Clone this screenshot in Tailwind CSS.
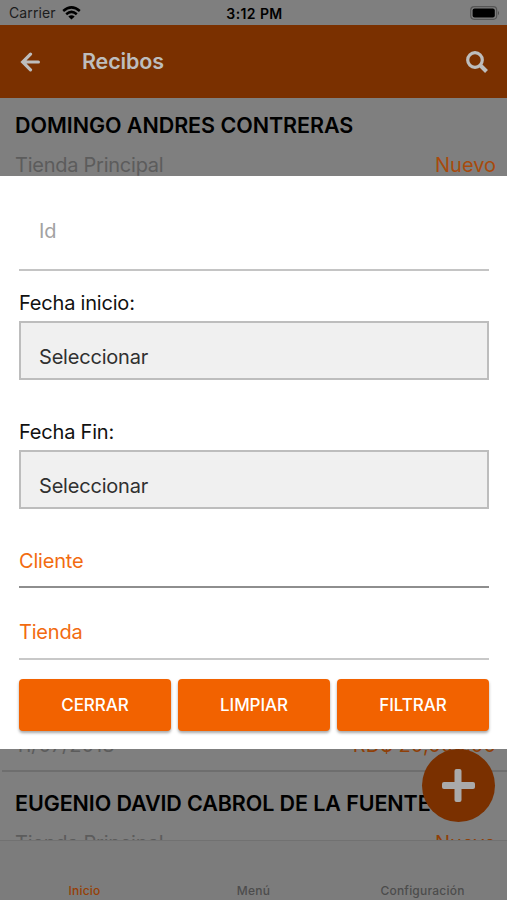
<!DOCTYPE html>
<html lang="es">
<head>
<meta charset="utf-8">
<title>Recibos</title>
<script src="https://cdn.jsdelivr.net/npm/@tailwindcss/browser@4"></script>
</head>
<body class="font-['Inter','Liberation_Sans',sans-serif] text-black">
<div class="relative flex h-[900px] w-[507px] flex-col overflow-hidden bg-[#7f7f7f] whitespace-nowrap">
  <!-- Status bar -->
  <header class="grid h-[25px] shrink-0 grid-cols-3 items-center pt-[1px] pr-[7px] pl-[9px]">
    <div class="flex items-center gap-[6px] text-[14px] leading-none tracking-[0.1px] text-[#1c1c1c]">Carrier
      <svg class="h-[14px] w-[19px]" viewBox="0 0 19 14" fill="none" stroke="#000" stroke-width="2.5"><path d="M1.2 5Q9.5-2.2 17.8 5M4.2 8.2Q9.5 3.6 14.8 8.2"/><path d="M9.5 13.5 6.3 10.4Q9.5 7.9 12.7 10.4Z" fill="#000" stroke="none"/></svg>
    </div>
    <div class="pt-[2px] text-center text-[14px] leading-none font-semibold tracking-[0.4px]">3:12 PM</div>
    <svg class="h-[14px] w-[30px] justify-self-end" viewBox="0 0 30 14"><rect x=".7" y=".7" width="26" height="12.6" rx="3.5" fill="#7f7f7f" stroke="#565656" stroke-width="1.2"/><rect x="2.6" y="2.4" width="22.2" height="9.2" rx="2" fill="#000"/><path d="M28 4.7q2 2.3 0 4.6Z" fill="#4d4d4d"/></svg>
  </header>
  <!-- Title bar -->
  <nav class="flex h-[73px] shrink-0 items-center bg-[#7a3000] pr-[19px] pl-[20px] text-[#bdbdbd]">
    <svg class="h-[20px] w-[20px]" viewBox="0 0 20 20" fill="none" stroke="currentColor" stroke-width="3.2" stroke-linecap="round"><path d="M18.400 10H3M10.500 2.200 2.700 10l7.800 7.800"/></svg>
    <h1 class="ml-[42px] flex-1 pt-px text-[21.500px] leading-none font-semibold tracking-[-0.15px]">Recibos</h1>
    <svg class="h-[22px] w-[22px]" viewBox="0 0 22 22" fill="none" stroke="currentColor"><circle cx="9" cy="9" r="7.300" stroke-width="3.200"/><path d="m14 14 6.500 6.500" stroke-width="4"/></svg>
  </nav>
  <!-- Receipts -->
  <main class="h-[742px] shrink-0 overflow-hidden">
    <article class="ml-[2px] flex h-[674px] flex-col justify-between border-b-2 border-[#6e6e6e] pt-[15px] pr-[11px] pb-[13px] pl-[13px] text-[20px] leading-[24px]">
      <div>
        <h2 class="text-[21.500px] font-semibold tracking-[-0.05px]">DOMINGO ANDRES CONTRERAS</h2>
        <div class="mt-[16px] flex justify-between text-[#5c5c5c]"><span class="tracking-[-0.25px]">Tienda Principal</span><span class="text-[#a84a0c]">Nuevo</span></div>
      </div>
      <div class="flex justify-between text-[#5c5c5c]"><span>11/07/2018</span><span class="text-[#8f3f08]">RD$ 20,000.00</span></div>
    </article>
    <article class="pt-[19px] pr-[11px] pl-[15px] text-[20px] leading-[24px]">
      <h2 class="text-[21.500px] font-semibold tracking-[-0.1px]">EUGENIO DAVID CABROL DE LA FUENTE</h2>
      <div class="mt-[16px] flex justify-between text-[#5c5c5c]"><span class="tracking-[-0.25px]">Tienda Principal</span><span class="text-[#8f3f08]">Nuevo</span></div>
    </article>
  </main>
  <!-- Tabs -->
  <footer class="grid flex-1 grid-cols-3 items-end border-t border-[#717171] bg-[#7c7c7c] pb-[2px] text-center text-[12px] leading-[14px] font-medium tracking-[0.22px] text-[#4c4c4c]">
    <span class="text-[#963f05]">Inicio</span><span>Menú</span><span>Configuración</span>
  </footer>
  <!-- Add button -->
  <button class="absolute top-[749px] left-[422px] flex h-[73px] w-[73px] items-center justify-center rounded-full bg-[#7a3000]">
    <svg class="h-[33px] w-[33px]" viewBox="0 0 33 33" fill="#aaa"><rect x="12.500" y="0" width="7" height="33" rx="2"/><rect x="0" y="13" width="33" height="7" rx="2"/></svg>
  </button>
  <!-- Filter dialog -->
  <section class="absolute inset-x-0 top-[176px] flex h-[573px] flex-col bg-white pr-[18px] pl-[19px] text-[20px] leading-[24px] tracking-[-0.2px]">
    <div class="h-[95px] shrink-0 border-b-2 border-[#c4c4c4] pt-[43px] pl-[20px] text-[#a2a2a2]">Id</div>
    <label class="mt-[20px] text-[#111]">Fecha inicio:</label>
    <div class="mt-[6px] h-[59px] shrink-0 border-2 border-[#bdbdbd] bg-[#f0f0f0] pt-[22px] pl-[18px] text-[#303030]">Seleccionar</div>
    <label class="mt-[40px] text-[#111]">Fecha Fin:</label>
    <div class="mt-[6px] h-[59px] shrink-0 border-2 border-[#bdbdbd] bg-[#f0f0f0] pt-[22px] pl-[18px] text-[#303030]">Seleccionar</div>
    <div class="h-[79px] shrink-0 border-b-2 border-[#8e8e8e] pt-[40px] text-[#f26b10]">Cliente</div>
    <div class="h-[72px] shrink-0 border-b-2 border-[#c8c8c8] pt-[32px] text-[#f26b10]">Tienda</div>
    <div class="mt-[19px] grid grid-cols-3 gap-[7px] text-[17px] font-medium tracking-[-0.05px] text-white">
      <button class="h-[52px] rounded-[4px] bg-[#f26200] shadow-[0_2px_3px_rgba(0,0,0,0.35)]">CERRAR</button>
      <button class="h-[52px] rounded-[4px] bg-[#f26200] shadow-[0_2px_3px_rgba(0,0,0,0.35)]">LIMPIAR</button>
      <button class="h-[52px] rounded-[4px] bg-[#f26200] shadow-[0_2px_3px_rgba(0,0,0,0.35)]">FILTRAR</button>
    </div>
  </section>
</div>
</body>
</html>
